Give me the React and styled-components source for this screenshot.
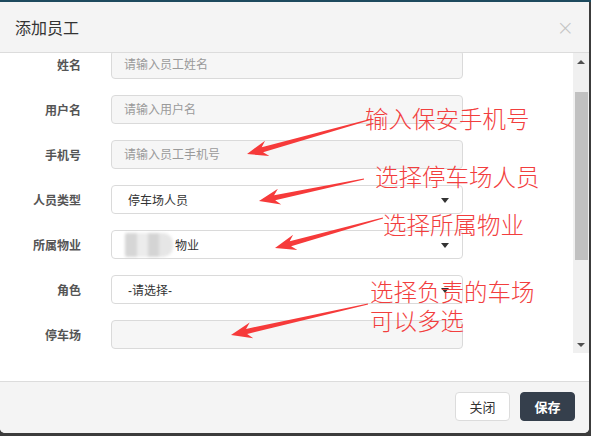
import React, { useEffect, useRef } from 'react';
import styled, { createGlobalStyle } from 'styled-components';

const GlobalStyle = createGlobalStyle`
  html, body {
    margin: 0;
    padding: 0;
    background: #3c3c3c;
    overflow: hidden;
  }
  body {
    font-family: "Liberation Sans", "Noto Sans CJK SC", sans-serif;
  }
`;

const Page = styled.div`
  position: relative;
  width: 591px;
  height: 436px;
  box-sizing: border-box;
  border-top: 2px solid #1d4a5e;
`;

const Modal = styled.div`
  width: 589px;
  height: 431px;
  background: #fff;
  display: flex;
  flex-direction: column;
  border-radius: 0 0 5px 5px;
  overflow: hidden;
`;

const Header = styled.div`
  height: 51px;
  box-sizing: border-box;
  flex: none;
  background: #f4f4f4;
  border-bottom: 1px solid #dcdcdc;
  display: flex;
  align-items: center;
  justify-content: space-between;
  padding: 0 15px 0 15px;
`;

const Title = styled.h4`
  margin: 0;
  font-size: 16px;
  font-weight: normal;
  color: #333;
`;

const Close = styled.span`
  font-size: 21px;
  line-height: 1;
  color: #c4c4c4;
  font-family: "DejaVu Sans", sans-serif;
  font-weight: 300;
  margin-top: 2px;
`;

const Body = styled.div`
  flex: 1;
  padding-bottom: 28px;
`;

const ScrollArea = styled.div`
  height: 300px;
  display: flex;
`;

const Viewport = styled.div`
  flex: 1;
  overflow: hidden;
`;

const Form = styled.div`
  display: flex;
  flex-direction: column;
  gap: 16px;
  padding: 15px 0 70px;
`;

const Row = styled.div`
  display: grid;
  grid-template-columns: 81px 352px;
  column-gap: 30px;
  align-items: center;
`;

const Label = styled.label`
  text-align: right;
  font-size: 12px;
  font-weight: bold;
  color: #555;
`;

const TextInput = styled.input`
  height: 29px;
  box-sizing: border-box;
  width: 100%;
  border: 1px solid #dadada;
  border-radius: 4px;
  background: #f6f6f6;
  padding: 0 12px;
  font-family: inherit;
  font-size: 12px;
  color: #333;
  outline: none;
  &::placeholder {
    color: #9a9a9a;
  }
`;

const SelectBox = styled.div`
  position: relative;
  height: 29px;
  box-sizing: border-box;
  border: 1px solid #dadada;
  border-radius: 4px;
  background: #fff;
  padding: 0 16px;
  display: flex;
  align-items: center;
  font-size: 12px;
  color: #333;
  &::after {
    content: '';
    position: absolute;
    right: 13px;
    top: 12px;
    border-left: 4px solid transparent;
    border-right: 4px solid transparent;
    border-top: 5px solid #333;
  }
`;

const Blurred = styled.span`
  display: inline-block;
  width: 48px;
  height: 24px;
  margin: 0 2px 0 -3px;
  background: linear-gradient(
    90deg,
    #d6d6d6 0 26%,
    #ececec 26% 48%,
    #d4d4d4 48% 70%,
    #e6e6e6 70% 100%
  );
  filter: blur(1.6px);
  border-radius: 2px 10px 10px 2px;
`;

const Scrollbar = styled.div`
  width: 16px;
  flex: none;
  background: #f0f0f0;
  display: flex;
  flex-direction: column;
`;

const ScrollButton = styled.div`
  height: 17px;
  flex: none;
  display: flex;
  align-items: center;
  justify-content: center;
  &::before {
    content: '';
    border-left: 4px solid transparent;
    border-right: 4px solid transparent;
    ${(p) => (p.$up ? 'border-bottom: 4px solid #505050;' : 'border-top: 4px solid #505050;')}
  }
`;

const Track = styled.div`
  flex: 1;
`;

const Thumb = styled.div`
  margin: 22px 1px 0 2px;
  height: 168px;
  background: #c1c1c1;
`;

const Footer = styled.div`
  height: 52px;
  box-sizing: border-box;
  flex: none;
  background: #f4f4f4;
  border-top: 1px solid #dcdcdc;
  display: flex;
  align-items: center;
  justify-content: flex-end;
  gap: 10px;
  padding: 0 14px 2px 0;
`;

const Button = styled.button`
  height: 29px;
  min-width: 55px;
  padding: 0 12px;
  border-radius: 4px;
  font-family: inherit;
  font-size: 13px;
  border: 1px solid ${(p) => (p.$primary ? '#353f4c' : '#dcdcdc')};
  background: ${(p) => (p.$primary ? '#353f4c' : '#fff')};
  color: ${(p) => (p.$primary ? '#fff' : '#333')};
  font-weight: ${(p) => (p.$primary ? 'bold' : 'normal')};
`;

const Overlay = styled.div`
  position: absolute;
  inset: 0;
  pointer-events: none;
`;

const Note = styled.div`
  position: absolute;
  font-family: "Noto Sans CJK SC", sans-serif;
  font-weight: 300;
  font-size: 23.5px;
  line-height: 29px;
  color: #f23e3e;
  white-space: nowrap;
`;

const Arrows = styled.svg`
  position: absolute;
  left: 0;
  top: 0;
`;

const rows = [
  { label: '姓名', placeholder: '请输入员工姓名' },
  { label: '用户名', placeholder: '请输入用户名' },
  { label: '手机号', placeholder: '请输入员工手机号' },
  { label: '人员类型', select: '停车场人员' },
  { label: '所属物业', select: '物业', blurred: true },
  { label: '角色', select: '-请选择-' },
  { label: '停车场', placeholder: '' },
];

const notes = [
  { x: 365, y: 102, text: ['输入保安手机号'] },
  { x: 375, y: 160, text: ['选择停车场人员'] },
  { x: 383, y: 208, text: ['选择所属物业'] },
  { x: 370, y: 275, text: ['选择负责的车场', '可以多选'] },
];

const arrows = [
  [372, 117, 247, 152],
  [364, 177, 259, 199],
  [383, 216, 275, 246],
  [368, 302, 231, 333],
];

// tapered arrow with a barbed head, tail -> tip
const arrowPoints = ([x1, y1, x2, y2]) => {
  const len = Math.hypot(x2 - x1, y2 - y1);
  const dx = (x2 - x1) / len;
  const dy = (y2 - y1) / len;
  const nx = -dy;
  const ny = dx;
  const head = 21;
  const joint = 16;
  const wing = 8;
  const shaft = 2.6;
  const tail = 0.6;
  const pt = (along, side) => `${x2 - dx * along + nx * side},${y2 - dy * along + ny * side}`;
  return [
    pt(len, tail),
    pt(joint, shaft),
    pt(head, wing),
    pt(0, 0),
    pt(head, -wing),
    pt(joint, -shaft),
    pt(len, -tail),
  ].join(' ');
};

const App = () => {
  const viewport = useRef(null);

  useEffect(() => {
    if (viewport.current) viewport.current.scrollTop = 18;
  }, []);

  return (
    <Page>
      <GlobalStyle />
      <Modal>
        <Header>
          <Title>添加员工</Title>
          <Close>×</Close>
        </Header>
        <Body>
          <ScrollArea>
            <Viewport ref={viewport}>
              <Form>
                {rows.map((row) => (
                  <Row key={row.label}>
                    <Label>{row.label}</Label>
                    {row.select ? (
                      <SelectBox>
                        {row.blurred && <Blurred />}
                        {row.select}
                      </SelectBox>
                    ) : (
                      <TextInput readOnly placeholder={row.placeholder} />
                    )}
                  </Row>
                ))}
              </Form>
            </Viewport>
            <Scrollbar>
              <ScrollButton $up />
              <Track>
                <Thumb />
              </Track>
              <ScrollButton />
            </Scrollbar>
          </ScrollArea>
        </Body>
        <Footer>
          <Button>关闭</Button>
          <Button $primary>保存</Button>
        </Footer>
      </Modal>
      <Overlay>
        <Arrows width="591" height="436">
          {arrows.map((a, i) => (
            <polygon key={i} points={arrowPoints(a)} fill="#f63a3a" />
          ))}
        </Arrows>
        {notes.map((n) => (
          <Note key={n.text[0]} style={{ left: n.x, top: n.y }}>
            {n.text.map((line) => (
              <div key={line}>{line}</div>
            ))}
          </Note>
        ))}
      </Overlay>
    </Page>
  );
};

export default App;
